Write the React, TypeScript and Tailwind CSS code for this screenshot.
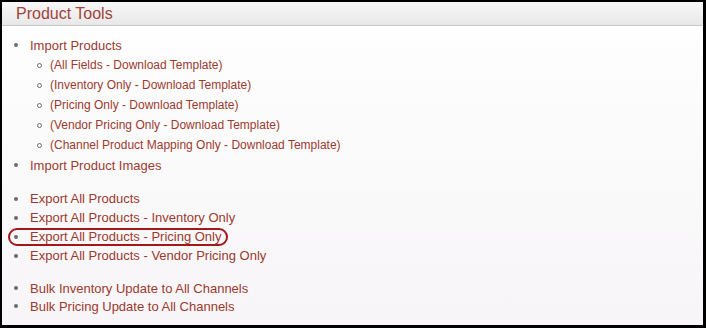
import React from 'react';

const linkColor = 'text-[#9b3a2e]';

const MainItem = ({ label, circled = false, tight = false }: { label: string; circled?: boolean; tight?: boolean }) => (
  <li className={`relative flex items-center pl-[12px] ${tight ? 'h-[18px]' : 'h-[19px]'}`}>
    <span className="w-[4px] h-[4px] rounded-full bg-[#6b6b6b] shrink-0" />
    <span className={`ml-[12px] ${linkColor}`}>{label}</span>
    {circled && (
      <span className="absolute left-[6px] top-[1px] w-[220px] h-[18px] rounded-[9px] border-2 border-[#a3161a]" />
    )}
  </li>
);

const SubItem = ({ label }: { label: string }) => (
  <li className="flex items-center h-[20px] pl-[35px] text-[12px]">
    <span className="w-[5px] h-[5px] rounded-full border border-[#6b6b6b] shrink-0" />
    <span className={`ml-[8px] ${linkColor}`}>{label}</span>
  </li>
);

export default function App() {
  return (
    <div
      className="w-[706px] h-[328px] border-t-2 border-l-2 border-r-[3px] border-b-[3px] border-black bg-gradient-to-b from-white to-[#f7f5f7] text-[13px] leading-[19px]"
      style={{ fontFamily: '"Liberation Sans", Arial, sans-serif' }}
    >
      <div className="h-[24px] border-b border-[#cdc5cd] bg-gradient-to-b from-[#f8f8f8] to-[#e8e8e8] pl-[14px] flex items-center">
        <h2 className="text-[16px] text-[#a1433a]">Product Tools</h2>
      </div>

      <ul className="pt-[9px]">
        <li className="flex items-center h-[20px] pl-[12px]">
          <span className="w-[4px] h-[4px] rounded-full bg-[#6b6b6b] shrink-0" />
          <span className={`ml-[12px] ${linkColor}`}>Import Products</span>
        </li>
        <SubItem label="(All Fields - Download Template)" />
        <SubItem label="(Inventory Only - Download Template)" />
        <SubItem label="(Pricing Only - Download Template)" />
        <SubItem label="(Vendor Pricing Only - Download Template)" />
        <SubItem label="(Channel Product Mapping Only - Download Template)" />
        <li className="flex items-center h-[20px] pl-[12px]">
          <span className="w-[4px] h-[4px] rounded-full bg-[#6b6b6b] shrink-0" />
          <span className={`ml-[12px] ${linkColor}`}>Import Product Images</span>
        </li>
      </ul>

      <ul className="mt-[14px]">
        <MainItem label="Export All Products" />
        <MainItem label="Export All Products - Inventory Only" />
        <MainItem label="Export All Products - Pricing Only" circled />
        <MainItem label="Export All Products - Vendor Pricing Only" />
      </ul>

      <ul className="mt-[14px]">
        <MainItem label="Bulk Inventory Update to All Channels" tight />
        <MainItem label="Bulk Pricing Update to All Channels" tight />
      </ul>
    </div>
  );
}
